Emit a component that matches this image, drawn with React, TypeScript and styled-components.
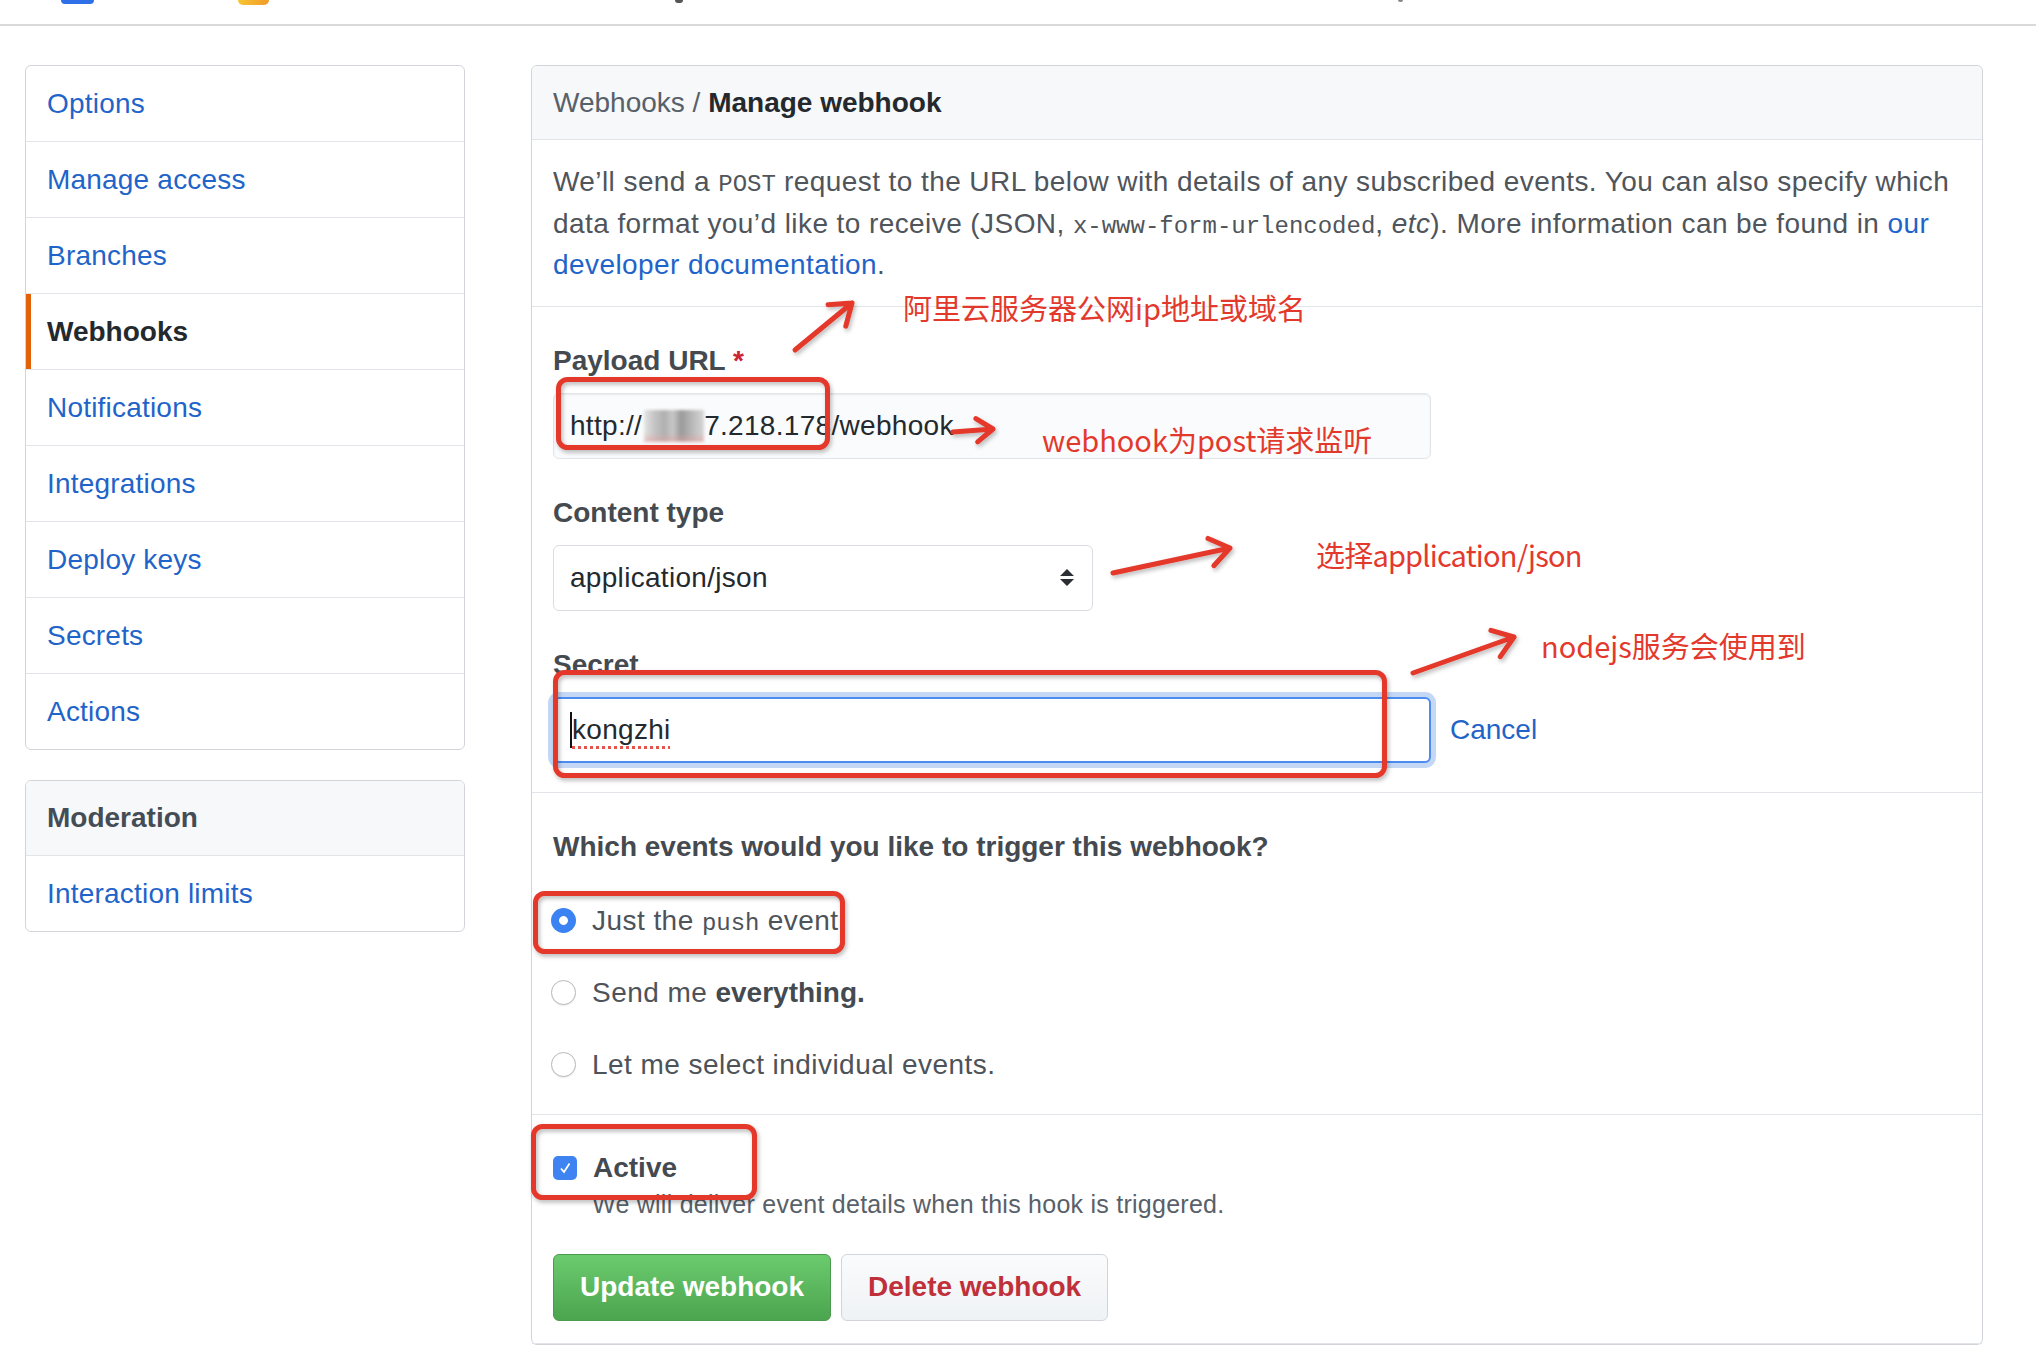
import React from 'react';
import styled, { createGlobalStyle, css } from 'styled-components';

const GlobalStyle = createGlobalStyle`
  html, body {
    margin: 0;
    padding: 0;
    background: #fff;
  }
  body {
    font-family: "Liberation Sans", Arial, "Noto Sans CJK SC", sans-serif;
    font-size: 28px;
    color: #24292e;
    -webkit-font-smoothing: antialiased;
  }
  * {
    box-sizing: border-box;
  }
`;

const RED = '#e3392c';
const LINK = '#1f64c9';

// cut-off browser chrome at the very top
const TopBar = styled.div`
  height: 26px;
  display: flex;
  align-items: flex-start;
  border-bottom: 2px solid #dadada;
`;

const TopIcon = styled.span<{ $w: number; $h: number; $left: number; $bg: string }>`
  display: block;
  flex: none;
  width: ${(p) => p.$w}px;
  height: ${(p) => p.$h}px;
  margin-left: ${(p) => p.$left}px;
  background: ${(p) => p.$bg};
  border-radius: 0 0 5px 5px;
`;

const Layout = styled.div`
  display: flex;
  align-items: flex-start;
  gap: 66px;
  padding: 39px 53px 0 25px;
`;

const Sidebar = styled.nav`
  width: 440px;
  flex: none;
  display: flex;
  flex-direction: column;
  gap: 30px;
`;

const MenuBox = styled.div`
  border: 1px solid #d1d5da;
  border-radius: 6px;
  overflow: hidden;
`;

const MenuItem = styled.a<{ $selected?: boolean }>`
  display: flex;
  align-items: center;
  height: 75px;
  padding: 0 21px;
  color: ${LINK};
  letter-spacing: 0.2px;
  text-decoration: none;
  & + & {
    height: 76px;
    border-top: 1px solid #e1e4e8;
  }
  ${(p) =>
    p.$selected &&
    css`
      color: #24292e;
      font-weight: bold;
      letter-spacing: 0;
      box-shadow: inset 5px 0 0 #e36209;
    `}
`;

const MenuHeading = styled.div`
  display: flex;
  align-items: center;
  height: 75px;
  padding: 0 21px;
  background: #f6f8fa;
  color: #444d56;
  font-weight: bold;
  border-bottom: 1px solid #e1e4e8;
`;

const Main = styled.section`
  flex: 1;
  position: relative;
  border: 1px solid #d1d5da;
  border-radius: 6px;
`;

const PanelHeader = styled.div`
  height: 74px;
  display: flex;
  align-items: center;
  padding: 0 21px;
  background: #f6f8fa;
  border-bottom: 1px solid #e1e4e8;
  border-radius: 6px 6px 0 0;
  color: #586069;
  b {
    color: #24292e;
  }
`;

const Section = styled.div<{ $pad: string }>`
  padding: ${(p) => p.$pad};
  border-bottom: 1px solid #e1e4e8;
  &:last-child {
    border-bottom: 0;
  }
`;

const Description = styled.p`
  margin: 0;
  line-height: 41.5px;
  letter-spacing: 0.42px;
  color: #4f555b;
  a {
    color: ${LINK};
    text-decoration: none;
  }
`;

const Code = styled.code`
  font-family: "Liberation Mono", "DejaVu Sans Mono", monospace;
  font-size: 24px;
  line-height: 1;
  letter-spacing: 0;
`;

const Field = styled.div`
  & + & {
    margin-top: 33px;
  }
`;

const Label = styled.div`
  line-height: 42px;
  font-weight: bold;
  color: #444a50;
  margin-bottom: 11px;
  span {
    color: #cb2431;
  }
`;

const TextBox = styled.div<{ $focused?: boolean; $w: number }>`
  width: ${(p) => p.$w}px;
  height: 66px;
  display: flex;
  align-items: center;
  padding: 0 16px;
  border: 1px solid #e1e4e8;
  border-radius: 6px;
  background: #fafbfc;
  color: #24292e;
  letter-spacing: 0.3px;
  white-space: nowrap;
  box-shadow: inset 0 1px 2px rgba(27, 31, 35, 0.075);
  ${(p) =>
    p.$focused &&
    css`
      background: #fff;
      border: 2px solid #4a8cf0;
      padding-left: 15px;
      box-shadow: 0 0 0 5px #c4d8f6;
    `}
`;

const Blurred = styled.span`
  display: inline-block;
  width: 60px;
  height: 32px;
  margin: 0 0 0 2px;
  background: linear-gradient(to bottom, transparent 72%, rgba(236, 160, 160, 0.55) 100%),
    linear-gradient(90deg, #e4e4e4 0%, #c6c6c6 16%, #b0b0b0 34%, #c8c8c8 48%, #9a9a9a 62%, #bcbcbc 82%, #d6d6d6 100%);
  filter: blur(1.5px);
`;

const Caret = styled.span`
  display: inline-block;
  width: 2px;
  height: 36px;
  background: #111;
`;

const Misspelled = styled.span`
  text-decoration: underline dotted #e5534b;
  text-decoration-thickness: 3px;
  text-underline-offset: 7px;
`;

const SelectBox = styled.div`
  width: 540px;
  height: 66px;
  display: flex;
  align-items: center;
  padding: 0 17px 0 16px;
  border: 1px solid #d9dde2;
  border-radius: 6px;
  background: #fff;
  color: #24292e;
  letter-spacing: 0.3px;
  svg {
    margin-left: auto;
  }
`;

const SecretRow = styled.div`
  display: flex;
  align-items: center;
  gap: 19px;
  a {
    color: ${LINK};
    text-decoration: none;
  }
`;

const Question = styled.div`
  line-height: 42px;
  font-weight: bold;
  color: #444a50;
`;

const RadioList = styled.div`
  margin-top: 32px;
  display: flex;
  flex-direction: column;
  gap: 30px;
`;

const Option = styled.label`
  display: flex;
  align-items: center;
  gap: 16px;
  height: 42px;
  line-height: 42px;
  letter-spacing: 0.45px;
  color: #4d5359;
  b {
    color: #444a50;
    letter-spacing: 0;
  }
`;

const Radio = styled.span<{ $checked?: boolean }>`
  flex: none;
  width: 25px;
  height: 25px;
  margin-left: -2px;
  border-radius: 50%;
  ${(p) =>
    p.$checked
      ? css`
          background: radial-gradient(circle, #fff 0 4px, #3b82f2 4.8px);
        `
      : css`
          background: #fff;
          border: 1px solid #b9b9b9;
          box-shadow: 0 1px 1px rgba(0, 0, 0, 0.08);
        `}
`;

const CheckBox = styled.span`
  flex: none;
  width: 24px;
  height: 24px;
  border-radius: 5px;
  background: #3d84f2;
  display: flex;
  align-items: center;
  justify-content: center;
`;

const ActiveLabel = styled(Option)`
  font-weight: bold;
  letter-spacing: 0;
  color: #444a50;
`;

const Hint = styled.div`
  margin: -2px 0 0 39px;
  font-size: 25px;
  line-height: 34px;
  letter-spacing: 0.25px;
  color: #586069;
`;

const Buttons = styled.div`
  display: flex;
  gap: 10px;
  margin-top: 33px;
`;

const Button = styled.button<{ $primary?: boolean }>`
  height: 67px;
  padding: 0 26px;
  border-radius: 6px;
  font: bold 28px "Liberation Sans", Arial, sans-serif;
  ${(p) =>
    p.$primary
      ? css`
          color: #fff;
          border: 1px solid #4b9a4d;
          background: linear-gradient(#6ccb6e, #4ba44e);
        `
      : css`
          color: #c0303a;
          border: 1px solid #d1d5da;
          background: linear-gradient(#fafbfc, #eff2f5);
        `}
`;

// red markup drawn on top of the screenshot
const Overlay = styled.svg`
  position: absolute;
  left: -1px;
  top: -1px;
  width: 1452px;
  height: 1280px;
  overflow: visible;
  pointer-events: none;
`;

const Note = styled.div<{ $x: number; $y: number; $tight?: boolean }>`
  position: absolute;
  left: ${(p) => p.$x}px;
  top: ${(p) => p.$y - 18}px;
  line-height: 36px;
  font-family: "Noto Sans CJK SC", sans-serif;
  font-size: 29px;
  letter-spacing: ${(p) => (p.$tight ? '-0.8px' : '0')};
  color: ${RED};
  white-space: nowrap;
  pointer-events: none;
`;

function arrow(x1: number, y1: number, x2: number, y2: number, head = 24) {
  const a = Math.atan2(y2 - y1, x2 - x1);
  const s = 0.62;
  const b1 = [x2 - head * Math.cos(a - s), y2 - head * Math.sin(a - s)];
  const b2 = [x2 - head * Math.cos(a + s), y2 - head * Math.sin(a + s)];
  return `M${x1} ${y1}L${x2} ${y2}M${b1[0]} ${b1[1]}L${x2} ${y2}L${b2[0]} ${b2[1]}`;
}

function box(x0: number, y0: number, x1: number, y1: number) {
  return { x: x0 + 2.5, y: y0 + 2.5, width: x1 - x0 - 5, height: y1 - y0 - 5 };
}

const arrows = [
  arrow(264, 285, 321, 238),
  arrow(422, 367, 462, 364, 20),
  arrow(582, 508, 699, 483),
  arrow(882, 608, 983, 572),
];

const boxes = [
  box(25, 312, 299, 385),
  box(22, 605, 856, 713),
  box(2, 826, 314, 889),
  box(0, 1059, 226, 1135),
];

const menu = [
  'Options',
  'Manage access',
  'Branches',
  'Webhooks',
  'Notifications',
  'Integrations',
  'Deploy keys',
  'Secrets',
  'Actions',
];

export default function App() {
  return (
    <>
      <GlobalStyle />
      <TopBar>
        <TopIcon $left={61} $w={33} $h={4} $bg="#2f6fe8" />
        <TopIcon $left={144} $w={31} $h={5} $bg="linear-gradient(90deg, #f7c531, #f19a2a)" />
        <TopIcon $left={406} $w={8} $h={3} $bg="#555" />
        <TopIcon $left={715} $w={5} $h={2} $bg="#888" />
      </TopBar>
      <Layout>
        <Sidebar>
          <MenuBox>
            {menu.map((item) => (
              <MenuItem key={item} $selected={item === 'Webhooks'}>
                {item}
              </MenuItem>
            ))}
          </MenuBox>
          <MenuBox>
            <MenuHeading>Moderation</MenuHeading>
            <MenuItem>Interaction limits</MenuItem>
          </MenuBox>
        </Sidebar>

        <Main>
          <PanelHeader>
            Webhooks /&nbsp;<b>Manage webhook</b>
          </PanelHeader>

          <Section $pad="21px 21px 20px">
            <Description>
              We’ll send a <Code>POST</Code> request to the URL below with details of any subscribed
              events. You can also specify which
              <br />
              data format you’d like to receive (JSON, <Code>x-www-form-urlencoded</Code>, <i>etc</i>).
              More information can be found in <a>our</a>
              <br />
              <a>developer documentation</a>.
            </Description>
          </Section>

          <Section $pad="33px 21px 29px">
            <Field>
              <Label>
                Payload URL <span>*</span>
              </Label>
              <TextBox $w={878}>
                http://
                <Blurred />
                7.218.178/webhook
              </TextBox>
            </Field>
            <Field>
              <Label>Content type</Label>
              <SelectBox>
                application/json
                <svg width="16" height="21" viewBox="0 0 16 21">
                  <path d="M8 2 L15 9 H1 Z M1 12 H15 L8 19 Z" fill="#2b2f33" />
                </svg>
              </SelectBox>
            </Field>
            <Field>
              <Label>Secret</Label>
              <SecretRow>
                <TextBox $w={878} $focused>
                  <Caret />
                  <Misspelled>kongzhi</Misspelled>
                </TextBox>
                <a>Cancel</a>
              </SecretRow>
            </Field>
          </Section>

          <Section $pad="33px 21px 28px">
            <Question>Which events would you like to trigger this webhook?</Question>
            <RadioList>
              <Option>
                <Radio $checked />
                <span>
                  Just the <Code>push</Code> event
                </span>
              </Option>
              <Option>
                <Radio />
                <span>
                  Send me <b>everything.</b>
                </span>
              </Option>
              <Option>
                <Radio />
                <span>Let me select individual events.</span>
              </Option>
            </RadioList>
          </Section>

          <Section $pad="32px 21px 22px">
            <ActiveLabel>
              <CheckBox>
                <svg width="14" height="14" viewBox="0 0 14 14">
                  <path d="M3 7.5 L6 11 L11.5 2.5" stroke="#fff" strokeWidth="1.8" fill="none" />
                </svg>
              </CheckBox>
              Active
            </ActiveLabel>
            <Hint>We will deliver event details when this hook is triggered.</Hint>
            <Buttons>
              <Button $primary>Update webhook</Button>
              <Button>Delete webhook</Button>
            </Buttons>
          </Section>

          <Overlay>
            <defs>
              <filter id="shade" x="-20%" y="-20%" width="140%" height="140%">
                <feDropShadow dx="1.5" dy="2.5" stdDeviation="2" floodColor="#000" floodOpacity="0.28" />
              </filter>
            </defs>
            <g filter="url(#shade)" stroke={RED} strokeWidth="5" fill="none" strokeLinecap="round" strokeLinejoin="round">
              {boxes.map((b, i) => (
                <rect key={i} {...b} rx="9" />
              ))}
              {arrows.map((d, i) => (
                <path key={i} d={d} />
              ))}
            </g>
          </Overlay>
          <Note $x={371} $y={241}>阿里云服务器公网ip地址或域名</Note>
          <Note $x={510} $y={373}>webhook为post请求监听</Note>
          <Note $x={784} $y={488} $tight>选择application/json</Note>
          <Note $x={1009} $y={579}>nodejs服务会使用到</Note>
        </Main>
      </Layout>
    </>
  );
}
